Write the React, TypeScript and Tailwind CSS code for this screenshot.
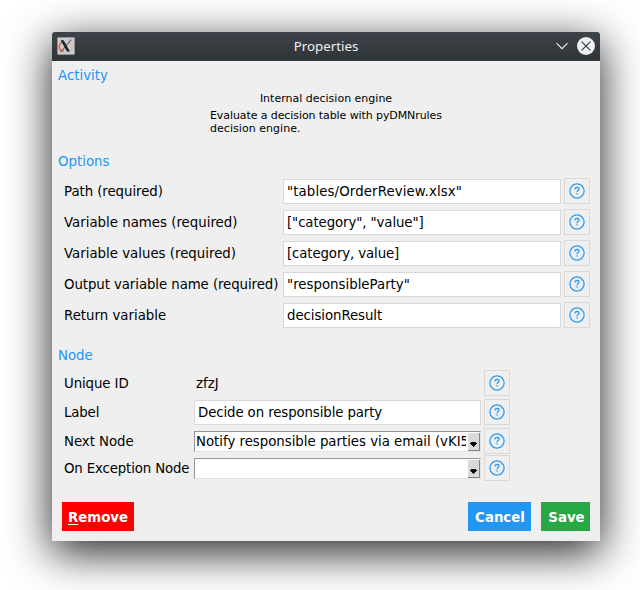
import React from "react";

const options = [
  { label: "Path (required)", value: '"tables/OrderReview.xlsx"', labelTracking: "tracking-[-0.06px]", valueTracking: "tracking-[0.11px]" },
  { label: "Variable names (required)", value: '["category", "value"]', labelTracking: "tracking-normal", valueTracking: "tracking-[-0.1px]" },
  { label: "Variable values (required)", value: "[category, value]", labelTracking: "tracking-normal", valueTracking: "tracking-[-0.12px]" },
  { label: "Output variable name (required)", value: '"responsibleParty"', labelTracking: "tracking-[-0.08px]", valueTracking: "tracking-normal" },
  { label: "Return variable", value: "decisionResult", labelTracking: "tracking-normal", valueTracking: "tracking-[-0.07px]" },
];

function HelpButton() {
  return (
    <button className="flex size-[26px] shrink-0 items-center justify-center border border-[#d9d9d9] bg-[#efefef]">
      <svg width="16" height="16" viewBox="0 0 16 16" fill="none" stroke="#2f9df4">
        <circle cx="8" cy="8" r="7.1" strokeWidth="1.3" />
        <path d="M6 6.4C6 5.1 6.8 4.5 8 4.5S10 5.1 10 6.2C10 7.5 8 7.4 8 9.2" strokeWidth="1.3" />
        <path d="M8 10.2V11.6" strokeWidth="1.4" />
      </svg>
    </button>
  );
}

function Heading({ children }: { children: React.ReactNode }) {
  return <h2 className="h-4 pl-1.5 text-[13.33px] leading-[18px] text-[#2196f3]">{children}</h2>;
}

function Combo({ value }: { value: string }) {
  return (
    <div className="flex h-[21px] w-[287px] border border-t-[#969696] border-r-[#e3e3e3] border-b-[#e3e3e3] border-l-[#969696] bg-white">
      <div className="min-w-0 flex-1 overflow-hidden pl-px leading-[19px] tracking-[-0.02px] whitespace-nowrap">{value}</div>
      <div className="mt-px ml-0.5 flex h-[18px] w-3 shrink-0 items-end justify-center border-r border-b border-[#828282] bg-[#d9d9d9] pb-[3px]">
        <svg width="7" height="5" viewBox="0 0 7 5" shapeRendering="crispEdges">
          <path d="M0 1H1V0H6V1H7V2H6V3H5V4H4V5H3V4H2V3H1V2H0Z" fill="#000" />
        </svg>
      </div>
    </div>
  );
}

function TitleBar() {
  return (
    <header className="grid h-[29px] grid-cols-[1fr_auto_1fr] items-center rounded-t-[3px] bg-linear-to-b from-[#3d4349] to-[#2f3437] pr-[5px] pb-px pl-[5px]">
      <svg width="18" height="18" viewBox="0 0 18 18" fill="none">
        <rect x="0.5" y="0.5" width="17" height="17" rx="1" fill="#c9cdd0" stroke="#8e969b" />
        <path d="M6.5 4.8C3.6 5.6 2.2 7.4 2.2 9.8C2.2 12.4 4.2 14 7 14" stroke="#ee6a3b" strokeWidth="1.6" />
        <path d="M12.5 6C16.6 8.4 16.2 12.6 10.5 14.2" stroke="#e5bd85" strokeWidth="1.2" />
        <path d="M14.3 2.6L3.6 15.2" stroke="#62666a" strokeWidth="1.1" />
        <path d="M3.6 3.2H6.6L13 14.5H10Z" fill="#202326" />
      </svg>
      <h1 className="font-['Noto_Sans',sans-serif] text-[13.33px] leading-4 text-[#eff0f1]">Properties</h1>
      <div className="flex items-center justify-end gap-[9px]">
        <svg width="12" height="8" viewBox="0 0 12 8" fill="none" stroke="#eff0f1" strokeWidth="1.1">
          <path d="M0.5 1.2L6 6.7L11.5 1.2" />
        </svg>
        <svg width="18" height="18" viewBox="0 0 18 18" fill="none">
          <circle cx="9" cy="9" r="9" fill="#eff0f1" />
          <path d="M4.6 4.6L13.4 13.4M13.4 4.6L4.6 13.4" stroke="#31363b" strokeWidth="1.1" />
        </svg>
      </div>
    </header>
  );
}

export default function App() {
  return (
    <div className="h-[590px] w-[640px] overflow-hidden bg-white pt-8 pl-[52px] font-['DejaVu_Sans',sans-serif] text-[13.33px] leading-4 text-black">
      <main className="flex h-[509px] w-[548px] flex-col rounded-t-[3px] bg-[#efefef] shadow-[0_11px_44px_1px_rgba(0,0,0,0.85)]">
        <TitleBar />
        <section className="flex h-[92px] flex-col pt-1.5">
          <Heading>Activity</Heading>
          <div className="flex flex-col items-center pt-[9px] text-[11px] leading-[13px]">
            <p>Internal decision engine</p>
            <div className="mt-1 w-[232px] whitespace-nowrap">
              <p className="tracking-[-0.09px]">Evaluate a decision table with pyDMNrules</p>
              <p className="tracking-[0.04px]">decision engine.</p>
            </div>
          </div>
        </section>

        <section className="flex h-[194px] flex-col">
          <Heading>Options</Heading>
          <div className="mt-[9px] flex flex-col gap-[5px] pl-3">
            {options.map(({ label, value, labelTracking, valueTracking }) => (
              <div key={label} className="flex h-[26px] items-center">
                <span className={`w-[219px] leading-[26px] pt-0.5 whitespace-nowrap ${labelTracking}`}>{label}</span>
                <div className={`mr-[3px] h-[25px] w-[278px] self-end border border-[#d9d9d9] bg-white pl-[3px] leading-6 ${valueTracking}`}>
                  {value}
                </div>
                <HelpButton />
              </div>
            ))}
          </div>
        </section>

        <section className="flex flex-col">
          <Heading>Node</Heading>
          <div className="mt-[7px] flex flex-col pl-3">
            <div className="flex h-[29px] items-start">
              <span className="w-[130px] leading-7 tracking-[-0.1px]">Unique ID</span>
              <span className="w-[290px] pl-0.5 leading-7">zfzJ</span>
              <HelpButton />
            </div>
            <div className="flex h-[29px] items-start">
              <span className="w-[130px] leading-7 tracking-[-0.15px]">Label</span>
              <div className="mt-px mr-[3px] h-[25px] w-[287px] border border-[#d9d9d9] bg-white pl-[3px] leading-6 tracking-[-0.11px]">
                Decide on responsible party
              </div>
              <HelpButton />
            </div>
            <div className="flex h-[27px] items-start">
              <span className="w-[130px] leading-7 tracking-[-0.05px]">Next Node</span>
              <div className="mt-[3px] mr-[3px]">
                <Combo value="Notify responsible parties via email (vKI5" />
              </div>
              <HelpButton />
            </div>
            <div className="flex h-[26px] items-start">
              <span className="w-[130px] leading-7 tracking-[-0.14px] whitespace-nowrap">On Exception Node</span>
              <div className="mt-[3px] mr-[3px]">
                <Combo value="" />
              </div>
              <HelpButton />
            </div>
          </div>
        </section>

        <footer className="mt-[21px] flex h-[29px] items-stretch pr-2.5 pl-2.5 font-bold text-white">
          <button className="w-[72px] bg-[#ff0000] pt-0.5">
            <span className="underline decoration-1 underline-offset-2">R</span>emove
          </button>
          <button className="ml-auto w-[63px] bg-[#2196f3] pt-0.5 pl-px">Cancel</button>
          <button className="ml-2.5 w-[49px] bg-[#28a745] pt-0.5 pl-0.5">Save</button>
        </footer>
      </main>
    </div>
  );
}
